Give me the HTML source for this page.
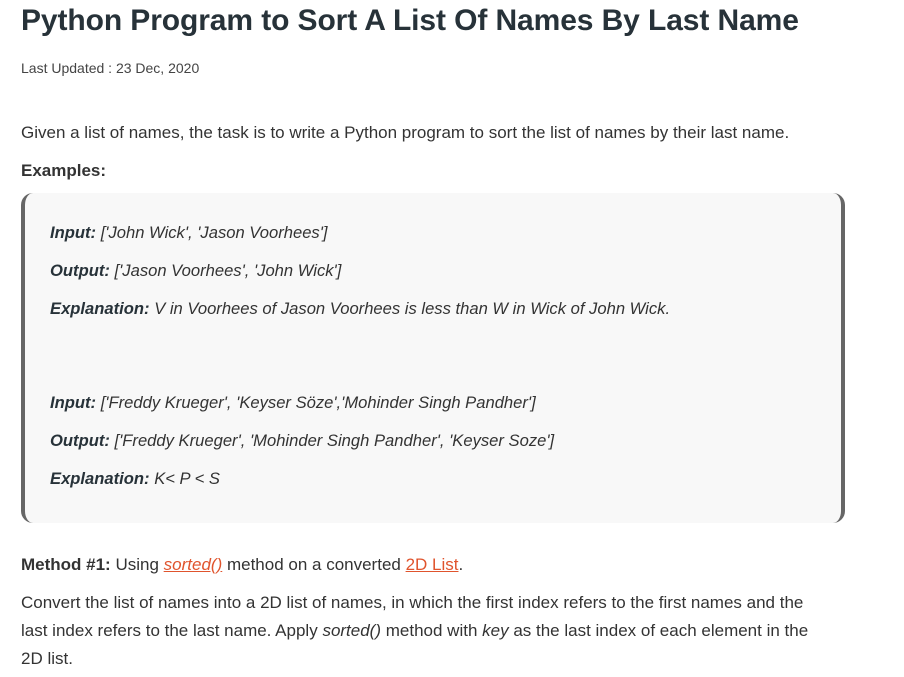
<!DOCTYPE html>
<html><head><meta charset="utf-8"><style>
body{margin:0;background:#fff;font-family:"Liberation Sans",sans-serif;color:#273239;width:904px;height:677px;overflow:hidden;position:relative}
.a{position:absolute;left:21px;white-space:nowrap}
h1{position:absolute;left:21px;top:4px;margin:0;font-size:30px;font-weight:600;letter-spacing:-0.1px}
.date{top:60px;font-size:14px;color:#444}
.p{font-size:17px;color:#333}
.box{position:absolute;left:21px;top:193px;width:816px;height:330px;background:#f8f8f8;border-left:4px solid #666;border-right:4px solid #666;border-radius:12px}
.box .a{left:25px;font-style:italic;font-size:16.6px;color:#333}
.box b{color:#273239}
a{color:#e0542d;text-decoration:underline}
</style></head><body>
<h1>Python Program to Sort A List Of Names By Last Name</h1>
<div class="a date">Last Updated : 23 Dec, 2020</div>
<div class="a p" style="top:123px">Given a list of names, the task is to write a Python program to sort the list of names by their last name.</div>
<div class="a p" style="top:161px"><b>Examples:</b></div>
<div class="box">
<div class="a" style="top:30px"><b>Input:</b> ['John Wick', 'Jason Voorhees']</div>
<div class="a" style="top:68px"><b>Output:</b> ['Jason Voorhees', 'John Wick']</div>
<div class="a" style="top:106px"><b>Explanation:</b> V in Voorhees of Jason Voorhees is less than W in Wick of John Wick.</div>
<div class="a" style="top:200px"><b>Input:</b> ['Freddy Krueger', 'Keyser Söze','Mohinder Singh Pandher']</div>
<div class="a" style="top:238px"><b>Output:</b> ['Freddy Krueger', 'Mohinder Singh Pandher', 'Keyser Soze']</div>
<div class="a" style="top:276px"><b>Explanation:</b> K&lt; P &lt; S</div>
</div>
<div class="a p" style="top:555px"><b>Method #1:</b> Using <a><i>sorted()</i></a> method on a converted <a>2D List</a>.</div>
<div class="a p" style="top:589px;line-height:28px;white-space:normal;width:800px">Convert the list of names into a 2D list of names, in which the first index refers to the first names and the last index refers to the last name. Apply <i>sorted()</i> method with <i>key</i> as the last index of each element in the 2D list.</div>
</body></html>
